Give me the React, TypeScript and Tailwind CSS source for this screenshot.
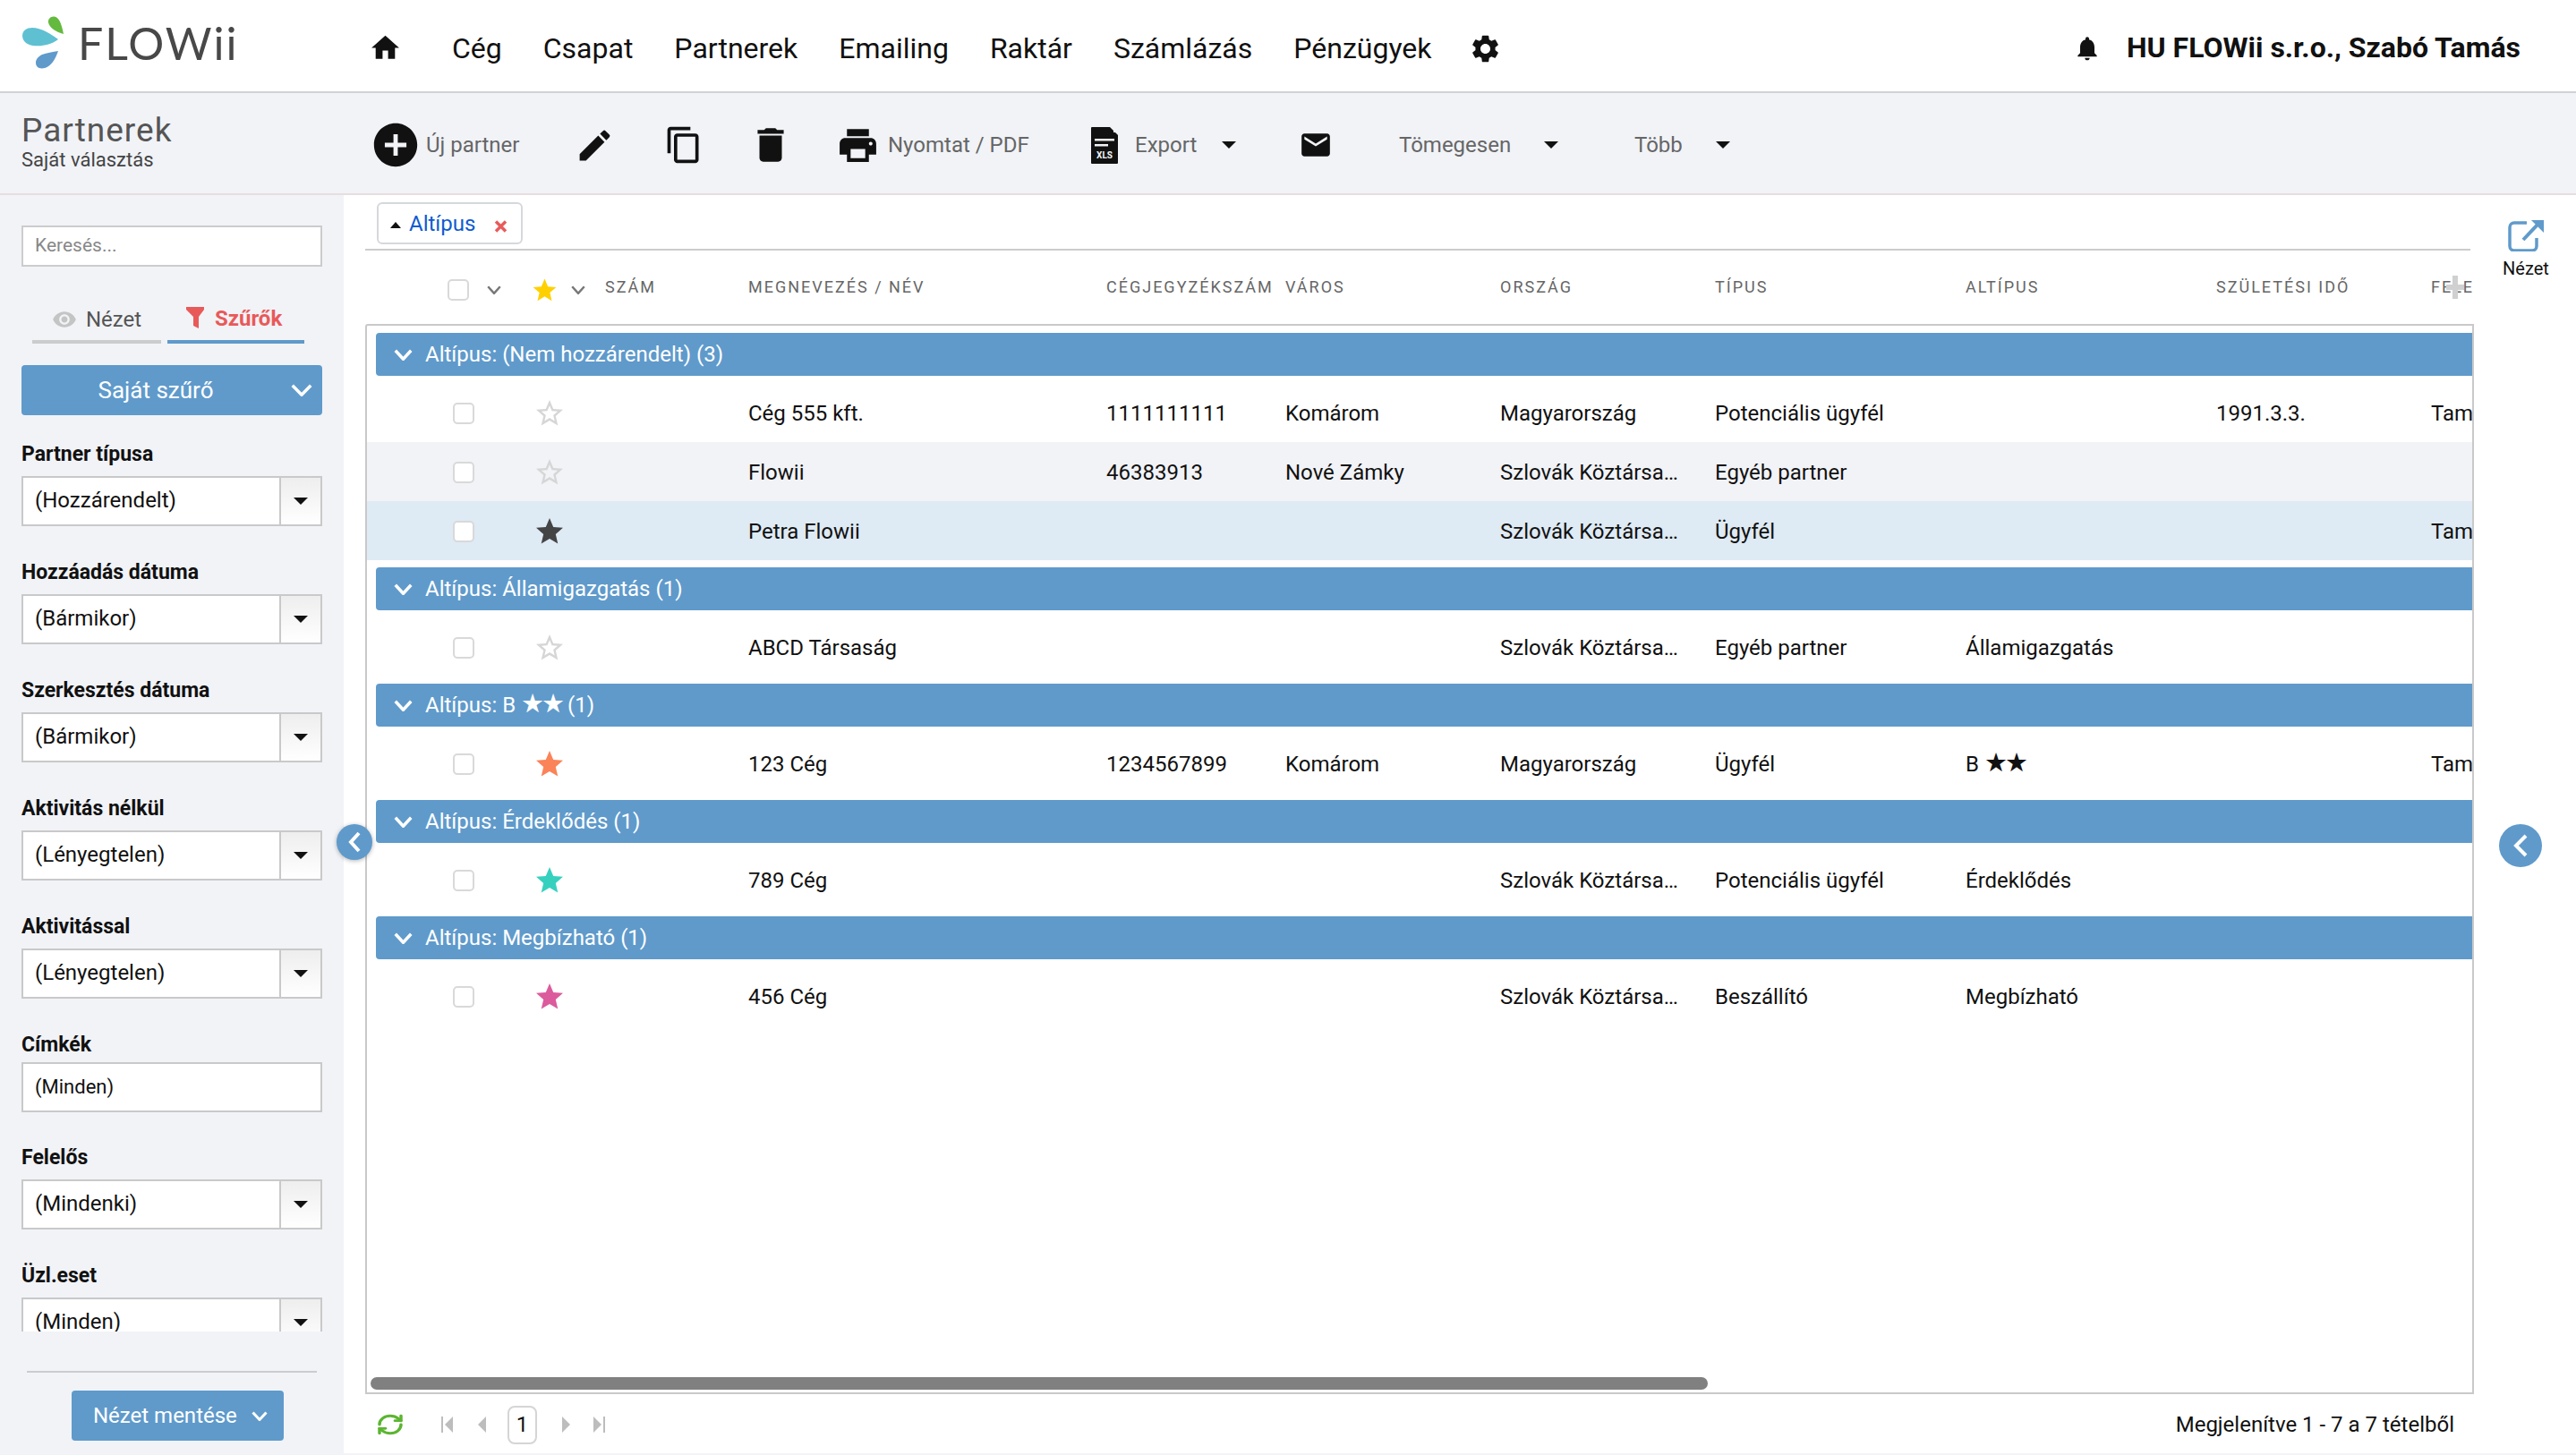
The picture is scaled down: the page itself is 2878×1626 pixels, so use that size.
import React from 'react';
import { RefreshCw } from 'lucide-react';
import {
  MdAddCircle,
  MdContentCopy,
  MdDelete,
  MdEdit,
  MdEmail,
  MdHome,
  MdNotifications,
  MdPrint,
  MdRemoveRedEye,
  MdSettings,
  MdStar,
  MdStarBorder,
} from 'react-icons/md';

const NAV = ['Cég', 'Csapat', 'Partnerek', 'Emailing', 'Raktár', 'Számlázás', 'Pénzügyek'];

const COLS = 'grid grid-cols-[426px_400px_200px_240px_240px_280px_280px_240px_1fr]';

type Row = {
  name: string;
  reg?: string;
  city?: string;
  country: string;
  type: string;
  sub?: string;
  born?: string;
  owner?: string;
  star: string;
  filled?: boolean;
  bg?: string;
};

const GROUPS: { title: string; rows: Row[] }[] = [
  {
    title: 'Altípus: (Nem hozzárendelt) (3)',
    rows: [
      { name: 'Cég 555 kft.', reg: '1111111111', city: 'Komárom', country: 'Magyarország', type: 'Potenciális ügyfél', born: '1991.3.3.', owner: 'Tamás', star: 'text-[#d6d6d6]' },
      { name: 'Flowii', reg: '46383913', city: 'Nové Zámky', country: 'Szlovák Köztársa…', type: 'Egyéb partner', star: 'text-[#d6d6d6]', bg: 'bg-[#f1f3f7]' },
      { name: 'Petra Flowii', country: 'Szlovák Köztársa…', type: 'Ügyfél', owner: 'Tamás', star: 'text-[#444444]', filled: true, bg: 'bg-[#deeaf4]' },
    ],
  },
  {
    title: 'Altípus: Államigazgatás (1)',
    rows: [{ name: 'ABCD Társaság', country: 'Szlovák Köztársa…', type: 'Egyéb partner', sub: 'Államigazgatás', star: 'text-[#d6d6d6]' }],
  },
  {
    title: 'Altípus: B ★★ (1)',
    rows: [{ name: '123 Cég', reg: '1234567899', city: 'Komárom', country: 'Magyarország', type: 'Ügyfél', sub: 'B ★★', owner: 'Tamás', star: 'text-[#fb8358]', filled: true }],
  },
  {
    title: 'Altípus: Érdeklődés (1)',
    rows: [{ name: '789 Cég', country: 'Szlovák Köztársa…', type: 'Potenciális ügyfél', sub: 'Érdeklődés', star: 'text-[#36d1be]', filled: true }],
  },
  {
    title: 'Altípus: Megbízható (1)',
    rows: [{ name: '456 Cég', country: 'Szlovák Köztársa…', type: 'Beszállító', sub: 'Megbízható', star: 'text-[#dc5b9d]', filled: true }],
  },
];

const FILTERS = [
  { label: 'Partner típusa', value: '(Hozzárendelt)' },
  { label: 'Hozzáadás dátuma', value: '(Bármikor)' },
  { label: 'Szerkesztés dátuma', value: '(Bármikor)' },
  { label: 'Aktivitás nélkül', value: '(Lényegtelen)' },
  { label: 'Aktivitással', value: '(Lényegtelen)' },
];

// the two star glyphs sit bigger than the text around them
const WithStars = ({ text }: { text: string }) => {
  const parts = text.split('★★');
  if (parts.length < 2) return <>{text}</>;
  return (
    <>
      {parts[0]}
      <span className="text-[29px] leading-none tracking-[-3px]">★★</span>
      {parts[1]}
    </>
  );
};

const Caret = () => (
  <svg width="16" height="8" viewBox="0 0 16 8" className="shrink-0">
    <path d="M0 0h16L8 8z" fill="#111" />
  </svg>
);

const Chevron = ({ w, h, sw, color = 'white' }: { w: number; h: number; sw: number; color?: string }) => (
  <svg width={w} height={h} viewBox={`0 0 ${w} ${h}`} className="shrink-0">
    <path d={`M${sw / 2} ${sw / 2}L${w / 2} ${h - sw / 2}L${w - sw / 2} ${sw / 2}`} fill="none" stroke={color} strokeWidth={sw} />
  </svg>
);

const Logo = () => (
  <svg width="48" height="62" viewBox="0 0 48 62" className="shrink-0">
    <path d="M46 21C38 19 30 14 29 8c-.6-4 3-7 6.500-6.500C41 2 44 10 46 21z" fill="#64b93f" />
    <path d="M40 27C32 33 22 35 12 34 4 33 0 28 0 23 0 17 5 14 11 14 21 14 32 21 40 27z" fill="#5fc0d2" />
    <path d="M40 40C37 49 32 57 25 59c-6 1.500-10-1-10-6 0-4 3-7 7-9 5-2 12-3 18-4z" fill="#5f9acb" />
  </svg>
);

const SelectBox = ({ value }: { value: string }) => (
  <div className="flex h-[56px] w-[336px] items-stretch border-2 border-[#c9c9c9] bg-white">
    <div className="flex-1 pl-[13px] text-[24px] leading-[50px] text-[#111]">{value}</div>
    <div className="flex w-[46px] items-center justify-center border-l-2 border-[#c9c9c9] bg-linear-to-b from-[#eeeeee] to-white">
      <Caret />
    </div>
  </div>
);

const Filter = ({ label, value }: { label: string; value: string }) => (
  <div className="mb-[39px]">
    <div className="mb-[11px] text-[23px] font-bold leading-[26px] text-[#111]">{label}</div>
    <SelectBox value={value} />
  </div>
);

const Sidebar = () => (
  <aside className="relative flex w-[384px] shrink-0 flex-col bg-[#f1f3f7]">
    <div className="flex h-[277px] shrink-0 flex-col px-[24px] pt-[34px]">
      <div className="flex h-[46px] w-[336px] items-center border-2 border-[#cccccc] bg-white pl-[13px] text-[21px] text-[#888888]">Keresés...</div>
      <div className="mt-[34px] flex h-[52px] gap-[7px] pl-[12px]">
        <div className="flex w-[144px] items-start gap-[10px] border-b-4 border-[#cccccc] pl-[22px] pt-[11px]">
          <MdRemoveRedEye size={28} className="text-[#c4c4c4]" />
          <span className="text-[24px] leading-[28px] text-[#555555]">Nézet</span>
        </div>
        <div className="flex w-[153px] items-start gap-[12px] border-b-4 border-[#5f9acb] pl-[21px] pt-[10px]">
          <svg width="20" height="24" viewBox="0 0 20 24" className="mt-[1px] shrink-0">
            <path d="M0 0h20v3l-6 8v13l-6-3V11L0 3z" fill="#e85a5a" />
          </svg>
          <span className="text-[24px] font-bold leading-[28px] text-[#e85a5a]">Szűrők</span>
        </div>
      </div>
      <div className="relative mt-[24px] flex h-[56px] w-[336px] items-center justify-center rounded-[4px] bg-[#5f9acb] pr-[36px] text-[26px] text-white">
        Saját szűrő
        <span className="absolute right-[11px] top-[21px]">
          <Chevron w={24} h={14} sw={3.5} />
        </span>
      </div>
    </div>

    <div className="min-h-0 flex-1 overflow-hidden px-[24px]">
      {FILTERS.map((f) => (
        <Filter key={f.label} label={f.label} value={f.value} />
      ))}
      <div className="mb-[38px]">
        <div className="mb-[6px] text-[23px] font-bold leading-[26px] text-[#111]">Címkék</div>
        <div className="h-[56px] w-[336px] border-2 border-[#c9c9c9] bg-white pl-[13px] text-[22px] leading-[52px] text-[#111]">(Minden)</div>
      </div>
      <Filter label="Felelős" value="(Mindenki)" />
      <Filter label="Üzl.eset" value="(Minden)" />
    </div>

    <div className="h-[136px] shrink-0 px-[30px] pt-[44px]">
      <div className="h-[2px] w-[324px] bg-[#cccccc]" />
      <div className="ml-[50px] mt-[20px] flex h-[56px] w-[237px] items-center rounded-[4px] bg-[#5f9acb] pl-[24px] text-[24px] text-white">
        Nézet mentése
        <span className="ml-[16px]">
          <Chevron w={18} h={11} sw={3} />
        </span>
      </div>
    </div>

    <button className="absolute left-[376px] top-[703px] flex h-[40px] w-[40px] items-center justify-center rounded-full bg-[#5f9acb] shadow-[0_1px_5px_rgba(0,0,0,0.3)]">
      <svg width="14" height="24" viewBox="0 0 14 24">
        <path d="M12 2L3 12l9 10" fill="none" stroke="white" strokeWidth="4" />
      </svg>
    </button>
  </aside>
);

const Checkbox = () => <span className="block h-[24px] w-[24px] shrink-0 rounded-[5px] border-2 border-[#d9d9d9] bg-white" />;

const DataRow = ({ row }: { row: Row }) => {
  const Star = row.filled ? MdStar : MdStarBorder;
  return (
    <div className={`${COLS} h-[66px] items-center overflow-hidden whitespace-nowrap pt-[1px] text-[24px] text-[#111] ${row.bg ?? ''}`}>
      <div className="flex items-center pl-[96px]">
        <Checkbox />
        <Star size={36} className={`ml-[66px] ${row.star}`} />
      </div>
      <div>{row.name}</div>
      <div>{row.reg}</div>
      <div>{row.city}</div>
      <div>{row.country}</div>
      <div>{row.type}</div>
      <div>{row.sub && <WithStars text={row.sub} />}</div>
      <div>{row.born}</div>
      <div>{row.owner}</div>
    </div>
  );
};

const Grid = () => (
  <div className="flex h-[1196px] flex-col overflow-hidden rounded-tl-[3px] border-2 border-[#c9c9c9] pt-[8px]">
    <div className="min-h-0 flex-1">
      {GROUPS.map((g) => (
        <div key={g.title}>
          <div className="ml-[10px] flex h-[48px] items-center rounded-l-[4px] bg-[#5f9acb] pl-[20px] text-[24px] text-white">
            <Chevron w={21} h={13} sw={3.5} />
            <span className="ml-[14px]">
              <WithStars text={g.title} />
            </span>
          </div>
          <div className="py-[8px]">
            {g.rows.map((r) => (
              <DataRow key={r.name} row={r} />
            ))}
          </div>
        </div>
      ))}
    </div>
    <div className="mb-[3px] ml-[4px] h-[14px] w-[1494px] rounded-full bg-[#808080]" />
  </div>
);

const PagerArrow = ({ dir, bar }: { dir: 'l' | 'r'; bar?: boolean }) => (
  <svg width="13" height="18" viewBox="0 0 13 18" className="shrink-0">
    {dir === 'l' ? <path d="M13 0v18L4 9z" fill="#bdbdbd" /> : <path d="M0 0v18l9-9z" fill="#bdbdbd" />}
    {bar && <rect x={dir === 'l' ? 0 : 11} y="0" width="2" height="18" fill="#bdbdbd" />}
  </svg>
);

const Pager = () => (
  <div className="flex h-[66px] items-center pl-[12px] pr-[22px] pt-[2px] text-[24px] text-[#111]">
    <RefreshCw className="h-[26px] w-[32px] text-[#5cb531]" strokeWidth={2.6} preserveAspectRatio="none" />
    <span className="ml-[41px]"><PagerArrow dir="l" bar /></span>
    <span className="ml-[24px]"><PagerArrow dir="l" /></span>
    <span className="ml-[24px] flex h-[43px] w-[33px] items-center justify-center rounded-[8px] border-2 border-[#d5d5d5]">1</span>
    <span className="ml-[28px]"><PagerArrow dir="r" /></span>
    <span className="ml-[22px]"><PagerArrow dir="r" bar /></span>
    <span className="ml-auto">Megjelenítve 1 - 7 a 7 tételből</span>
  </div>
);

const HEADERS = ['MEGNEVEZÉS / NÉV', 'CÉGJEGYZÉKSZÁM', 'VÁROS', 'ORSZÁG', 'TÍPUS', 'ALTÍPUS', 'SZÜLETÉSI IDŐ'];

const HeaderRow = () => (
  <div className="relative grid h-[82px] grid-cols-[428px_400px_200px_240px_240px_280px_280px_240px_1fr] items-center overflow-hidden whitespace-nowrap pb-[2px] text-[18px] tracking-[2px] text-[#666666]">
    <div className="flex items-center pl-[92px]">
      <span className="mt-[8px] flex items-center">
        <Checkbox />
        <span className="ml-[20px]"><Chevron w={16} h={10} sw={2.5} color="#777" /></span>
        <MdStar size={31} className="ml-[33px] text-[#ffd000]" />
        <span className="ml-[14px]"><Chevron w={16} h={10} sw={2.5} color="#777" /></span>
      </span>
      <span className="ml-[22px]">SZÁM</span>
    </div>
    {HEADERS.map((h) => (
      <div key={h}>{h}</div>
    ))}
    <div>FELELŐS</div>
    <svg width="20" height="26" viewBox="0 0 20 26" className="absolute left-[2325px] top-[28px]">
      <path d="M7 0h6v10h7v6h-7v10H7V16H0v-6h7z" fill="#d0d0d0" />
    </svg>
  </div>
);

export default function App() {
  return (
    <div className="flex h-screen w-full flex-col overflow-hidden bg-white font-['Roboto',sans-serif]">
      <header className="flex h-[104px] shrink-0 items-center border-b-2 border-[#d2d2d6] pl-[25px]">
        <div className="mb-[6px] flex w-[387px] items-center">
          <Logo />
          <span className="ml-[14px] font-['Lato',sans-serif] text-[50px] leading-none tracking-[2px] text-[#484848]">FLOWii</span>
        </div>
        <MdHome size={37} className="mt-[4px] text-[#111]" />
        <nav className="ml-[56px] mt-[6px] flex items-center gap-[46px] text-[32px] text-[#111]">
          {NAV.map((n) => (
            <span key={n}>{n}</span>
          ))}
          <MdSettings size={37} className="-ml-[5px]" />
        </nav>
        <div className="ml-auto mt-[3px] flex items-center pr-[62px]">
          <MdNotifications size={32} className="mt-[3px] text-[#111]" />
          <span className="ml-[28px] text-[32px] font-bold text-[#111]">HU FLOWii s.r.o., Szabó Tamás</span>
        </div>
      </header>

      <div className="flex h-[114px] shrink-0 items-center border-b-2 border-[#e8dde0] bg-[#f1f3f7] pt-[4px] text-[24px] text-[#666666]">
        <div className="mb-[8px] w-[413px] pl-[24px]">
          <div className="text-[37px] leading-[42px] tracking-[1px] text-[#555555]">Partnerek</div>
          <div className="text-[22px] leading-[24px] text-[#444444]">Saját választás</div>
        </div>
        <div className="flex w-[229px] items-center">
          <MdAddCircle size={58} className="text-[#111]" />
          <span className="ml-[5px]">Új partner</span>
        </div>
        <div className="w-[100px]"><MdEdit size={45} className="text-[#111]" /></div>
        <div className="w-[94px]"><MdContentCopy size={44} className="text-[#111]" /></div>
        <div className="w-[98px]"><MdDelete size={50} className="text-[#111]" /></div>
        <div className="flex w-[285px] items-center">
          <MdPrint size={49} className="text-[#111]" />
          <span className="ml-[9px]">Nyomtat / PDF</span>
        </div>
        <div className="flex w-[232px] items-center">
          <svg width="30" height="41" viewBox="0 0 30 41" className="shrink-0">
            <path d="M1 0h20l9 9v31a1 1 0 0 1-1 1H1a1 1 0 0 1-1-1V1a1 1 0 0 1 1-1z" fill="#111" />
            <path d="M25 0l5 6h-5z" fill="#f1f3f7" />
            <rect x="4" y="13" width="22" height="2.500" fill="#f1f3f7" />
            <rect x="4" y="19" width="15" height="2.500" fill="#f1f3f7" />
            <text x="15" y="35" textAnchor="middle" fontSize="10" fontWeight="700" fill="#f1f3f7" fontFamily="Roboto">XLS</text>
          </svg>
          <span className="ml-[19px] w-[97px]">Export</span>
          <Caret />
        </div>
        <div className="w-[112px]"><MdEmail size={38} className="text-[#111]" /></div>
        <div className="flex w-[263px] items-center">
          <span className="w-[162px]">Tömegesen</span>
          <Caret />
        </div>
        <div className="flex items-center">
          <span className="w-[91px]">Több</span>
          <Caret />
        </div>
      </div>

      <div className="flex min-h-0 flex-1 border-b-2 border-[#f1f3f7]">
        <Sidebar />
        <main className="flex min-w-0 flex-1">
          <section className="ml-[24px] flex w-[2356px] shrink-0 flex-col">
            <div className="h-[62px] w-[2352px] shrink-0 border-b-2 border-[#cccccc] pl-[13px] pt-[8px]">
              <div className="flex h-[47px] w-[163px] items-center rounded-[6px] border-2 border-[#d5d8dc] pl-[13px] text-[24px] text-[#0f5bd0]">
                <svg width="12" height="7" viewBox="0 0 12 7" className="mt-[3px] shrink-0">
                  <path d="M0 7h12L6 0z" fill="#111" />
                </svg>
                <span className="ml-[9px]">Altípus</span>
                <svg width="15" height="14" viewBox="0 0 15 14" className="ml-[21px] mt-[6px] shrink-0">
                  <path d="M2 1.500l11 11M13 1.500l-11 11" stroke="#e85a5a" strokeWidth="3.500" />
                </svg>
              </div>
            </div>
            <HeaderRow />
            <Grid />
            <Pager />
          </section>
          <div className="relative flex-1">
            <div className="flex flex-col items-center pl-[2px] pt-[27px]">
              <svg width="42" height="36" viewBox="0 0 42 36" className="shrink-0">
                <path d="M22 4H8a5 5 0 0 0-5 5v21a5 5 0 0 0 5 5h20a5 5 0 0 0 5-5V21" fill="none" stroke="#5f9acb" strokeWidth="3.500" />
                <path d="M18 23L34 6" fill="none" stroke="#5f9acb" strokeWidth="4" />
                <path d="M27 1h14v14z" fill="#5f9acb" />
              </svg>
              <span className="mt-[4px] text-[20px] text-[#111]">Nézet</span>
            </div>
            <button className="absolute left-[28px] top-[703px] flex h-[48px] w-[48px] items-center justify-center rounded-full bg-[#5f9acb]">
              <svg width="16" height="26" viewBox="0 0 16 26">
                <path d="M14 2L3 13l11 11" fill="none" stroke="white" strokeWidth="4" />
              </svg>
            </button>
          </div>
        </main>
      </div>
    </div>
  );
}
